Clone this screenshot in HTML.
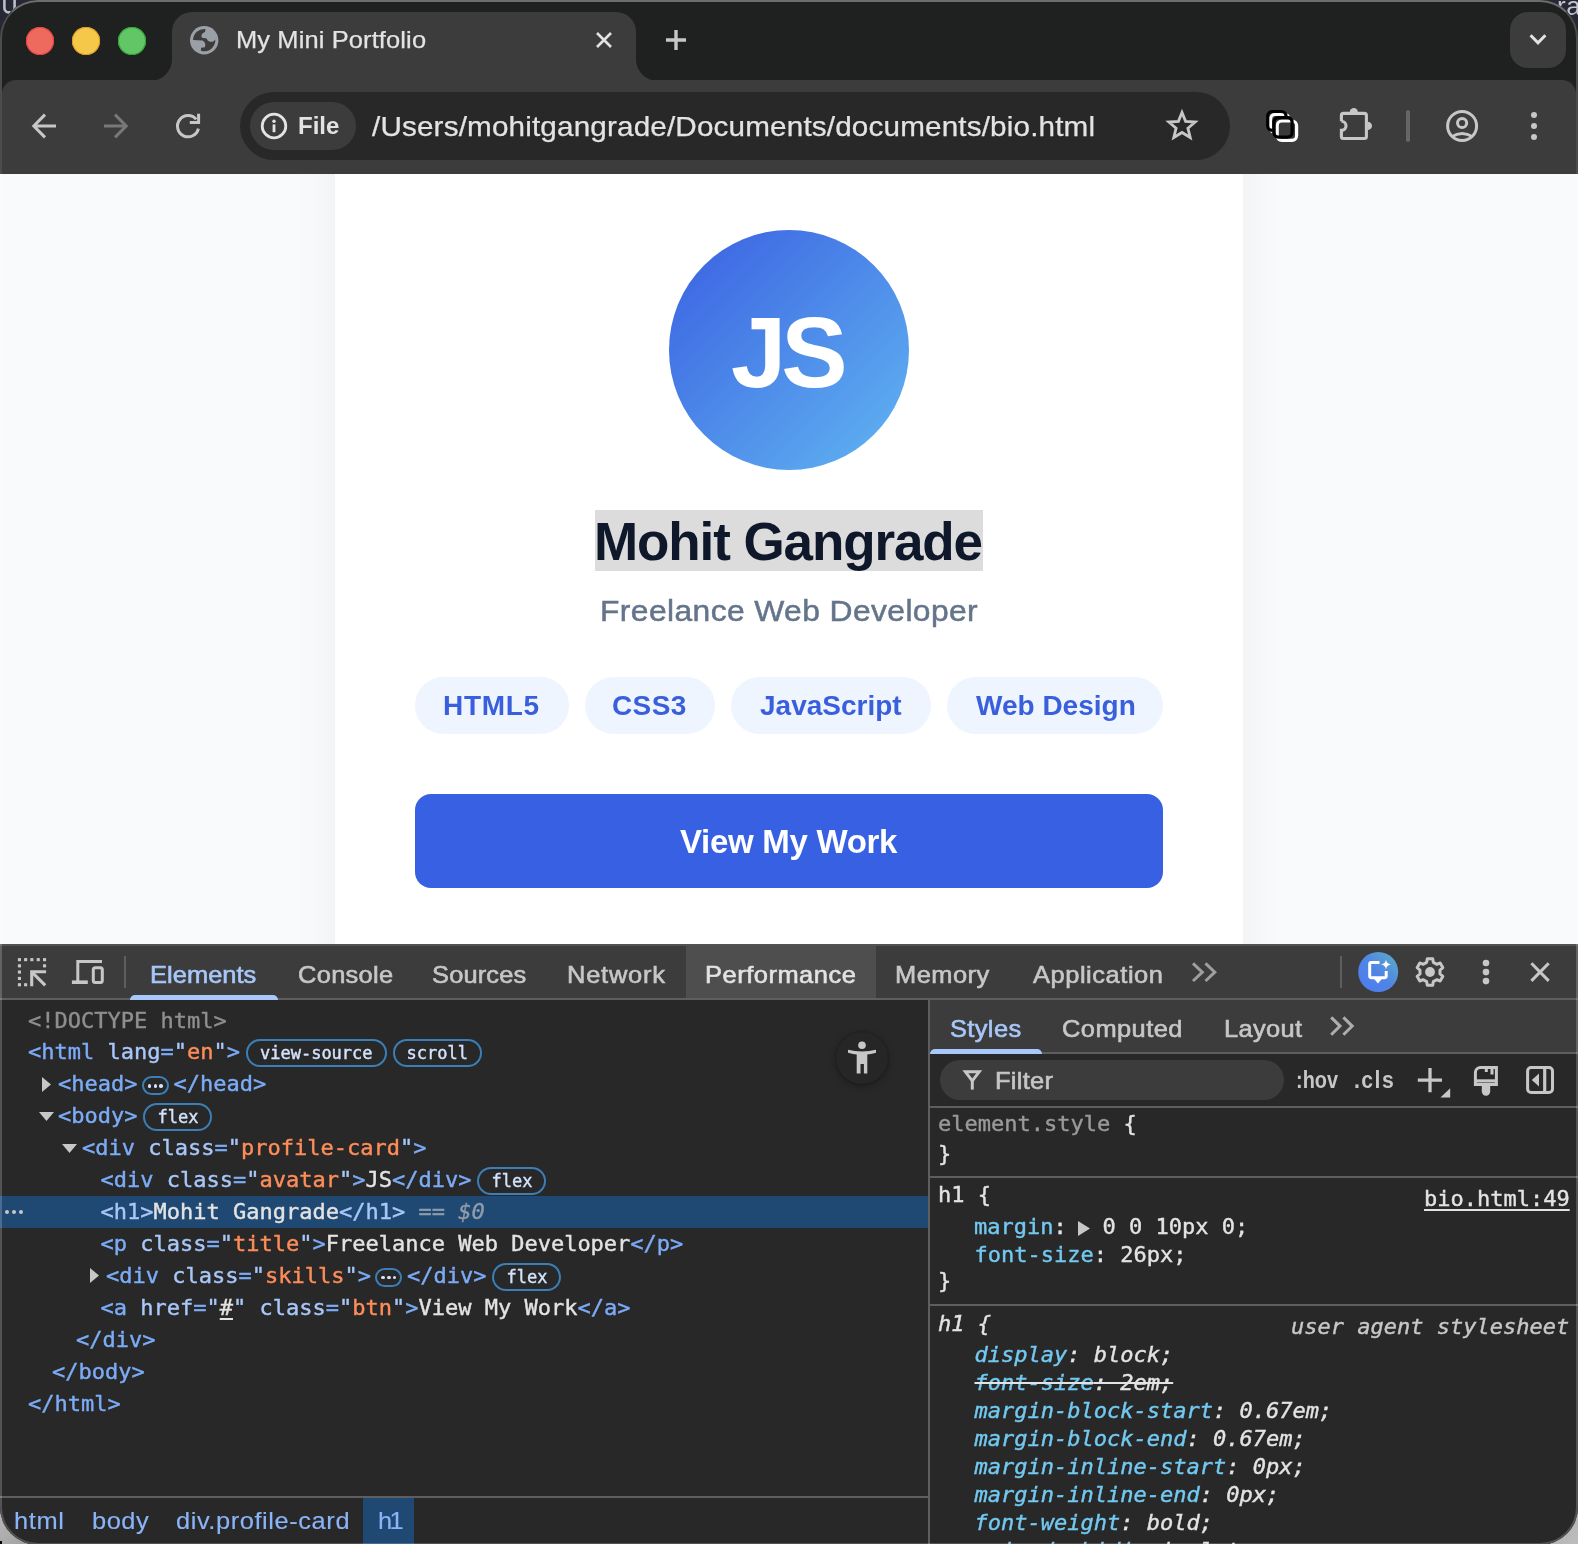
<!DOCTYPE html>
<html lang="en">
<head>
<meta charset="utf-8">
<title>My Mini Portfolio</title>
<style>
*{box-sizing:border-box;margin:0;padding:0}
html,body{width:1578px;height:1544px;overflow:hidden;background:#272834}
body{position:relative;font-family:"Liberation Sans",sans-serif;-webkit-font-smoothing:antialiased}
.abs{position:absolute}
.t{position:absolute;white-space:pre;line-height:1}
svg{position:absolute;overflow:visible}
/* window */
#win{position:absolute;left:0;top:0;width:1578px;height:1544px;overflow:hidden;background:transparent}
#winbg{position:absolute;left:0;top:0;width:1578px;height:1544.5px;border-radius:38px;background:#1f2020}
#clip{will-change:transform;position:absolute;left:0;top:0;width:1578px;height:1544.5px;border-radius:38px;overflow:hidden}
#clip>#in{position:absolute;left:0;top:0;width:1578px;height:1544px}
#winborder{position:absolute;left:0;top:0;width:1578px;height:1544.5px;border-radius:38px;border:2px solid rgba(255,255,255,.2);border-top-color:rgba(255,255,255,.35);pointer-events:none;z-index:50}
#tabstrip{position:absolute;left:0;top:0;width:1578px;height:81px;background:#1f2020}
#tab{position:absolute;left:172px;top:12px;width:464px;height:70px;background:#3c3c3c;border-radius:20px 20px 0 0}
#tab:before,#tab:after{content:"";position:absolute;bottom:1px;width:22px;height:22px;background:radial-gradient(circle at 0 0,rgba(0,0,0,0) 21.5px,#3c3c3c 22.5px)}
#tab:before{left:-22px}
#tab:after{right:-22px;transform:scaleX(-1)}
#toolbar{position:absolute;left:2px;top:80px;width:1574px;height:94px;background:#3c3c3c;border-radius:14px 14px 0 0}
#omni{position:absolute;left:240px;top:92px;width:990px;height:68px;border-radius:34px;background:#282828}
#chip{position:absolute;left:250px;top:102px;width:106px;height:48px;border-radius:24px;background:#3c3c3c}
#tsbtn{position:absolute;left:1510px;top:12px;width:56px;height:56px;border-radius:18px;background:#3c3c3c}
.tl{position:absolute;top:27px;width:28px;height:28px;border-radius:50%}
/* page */
#pg{position:absolute;left:0;top:174px;width:1578px;height:770px;background:#f8fafc;overflow:hidden}
#card{position:absolute;left:335px;top:-60px;width:908px;height:900px;background:#fff;box-shadow:0 0 44px rgba(20,25,35,.05)}
#avatar{position:absolute;left:669px;top:55.5px;width:240px;height:240px;border-radius:50%;background:linear-gradient(135deg,#3c63e2 5%,#5fb2f1 95%)}
.pill{position:absolute;top:503px;height:57px;border-radius:29px;background:#eff5ff}
.pt{color:#3a5fdd;font-weight:bold;font-size:28px}
#btn{position:absolute;left:415px;top:620px;width:748px;height:94px;border-radius:16px;background:#3860e2}
/* devtools */
#dt{position:absolute;left:0;top:944px;width:1578px;height:600px;background:#282828;overflow:hidden}
.mono{font-family:"DejaVu Sans Mono","Liberation Mono",monospace;font-size:22px;-webkit-text-stroke:0.4px currentColor}
.ui{font-family:"Liberation Sans",sans-serif;font-size:24px;-webkit-text-stroke:0.6px currentColor;transform:scaleX(1.06);transform-origin:0 0}

.row{position:absolute;white-space:pre;height:32px;line-height:32px}
.it{font-style:italic}
.tg{color:#7cacf8}.tgs{color:#a8c7fa}.an{color:#a8c7fa}.av{color:#fe8d59}.tx{color:#e3e3e3}.dc{color:#8f8f8f}.dc2{color:#9a9a9a}.pn{color:#72c9f1}
.eq{color:#8f9bab}.d0{color:#8f9bab;font-style:italic}
.bd{display:inline-block;vertical-align:top;margin:3px 0 0 6px;height:28px;line-height:24px;border:2px solid #3a7fb8;border-radius:14px;padding:0 12px;font-size:17px;color:#d3e3fd}
.bd+.bd{margin-left:6px}
.dd{display:inline-block;vertical-align:top;position:relative;margin:8px 4.5px 0 4.5px;width:27px;height:19px;border:2px solid #3a7fb8;border-radius:10px}
.dd i{position:absolute;top:6px;width:3.5px;height:3.5px;border-radius:50%;background:#d3e3fd}
.dd i:nth-child(1){left:4px}.dd i:nth-child(2){left:9.75px}.dd i:nth-child(3){left:15.5px}
.ld{position:absolute;top:0;width:4px;height:4px;border-radius:50%;background:#c7c7c7}
</style>
</head>
<body>
<div class="abs" style="left:0;top:1500px;width:44px;height:44px;background:linear-gradient(135deg,#bcbcbc,#9c9c9c)"></div>
<div class="abs" style="left:1534px;top:1500px;width:44px;height:44px;background:linear-gradient(135deg,#a4a4a4,#bebebe)"></div>
<div class="abs" style="left:0;top:1541px;width:2px;height:3px;background:#000"></div>
<svg style="left:0;top:0" width="24" height="16" viewBox="0 0 24 16"><path d="M4.4 -2V8.2A4.2 4.2 0 0 0 8.6 12.4H10.4A4.2 4.2 0 0 0 14.6 8.2V-2" stroke="#b9bdcc" stroke-width="2.6" fill="none"/></svg>
<div class="t" style="left:1557px;top:-7.5px;font-size:26px;color:#c3c7d3;letter-spacing:0.5px;will-change:transform">ra</div>
<div id="win"><div id="winbg"></div><div id="clip"><div id="in">
  <div id="tabstrip"></div>
  <div id="tab"></div>
  <div id="toolbar"></div>
  <div class="tl" style="left:26px;background:#ee6a5f;box-shadow:inset 0 0 0 1px #e0443e"></div>
  <div class="tl" style="left:72px;background:#f5c84a;box-shadow:inset 0 0 0 1px #dfa023"></div>
  <div class="tl" style="left:118px;background:#62c566;box-shadow:inset 0 0 0 1px #2fa734"></div>
  <div class="t" id="tabtitle" style="left:235.5px;top:27.5px;font-size:24px;color:#e3e3e3;letter-spacing:0.12px;transform:scaleX(1.06);transform-origin:0 0;-webkit-text-stroke:0.25px #e3e3e3">My Mini Portfolio</div>
  <div id="tsbtn"></div>
  <div id="omni"></div>
  <div id="chip"></div>
  <div class="t" id="filetxt" style="left:298px;top:114px;font-size:24px;color:#e3e3e3;font-weight:bold">File</div>
  <div class="t" id="url" style="left:371.5px;top:112.5px;font-size:28px;color:#e3e3e3;letter-spacing:0.14px;transform:scaleX(1.06);transform-origin:0 0;-webkit-text-stroke:0.25px #e3e3e3">/Users/mohitgangrade/Documents/documents/bio.html</div>

<!--IC-->
<svg style="left:189.9px;top:25.5px" width="28.4" height="28.4" viewBox="-14.2 -14.2 28.4 28.4"><circle r="14.2" fill="#9aa0a6"/><path fill="#3c3c3c" d="M1.3 -11.1 L0.8 -8.3 Q-2.2 -7.6 -2.6 -5.2 Q-3.4 -3.2 -1.6 -2.2 L1.8 -2 Q2.9 -1.4 3.3 0.1 Q4.3 1.5 6 1.55 L8.6 1.5 Q10 0.8 11.15 -0.6 A11.15 11.15 0 0 1 -3.3 10.65 L-3.2 7.6 L0.7 7.1 Q1.3 5 1 3.6 Q0.3 0.8 -1.6 0.2 L-11.14 -0.1 A11.15 11.15 0 0 1 1.3 -11.1Z"/></svg>
<svg style="left:596px;top:32px" width="16" height="16" viewBox="0 0 16 16"><path d="M1 1L15 15M15 1L1 15" stroke="#e3e3e3" stroke-width="2.6" fill="none"/></svg>
<svg style="left:666px;top:30px" width="20" height="20" viewBox="0 0 20 20"><path d="M10 0V20M0 10H20" stroke="#c7c7c7" stroke-width="3.4" fill="none"/></svg>
<svg style="left:1529px;top:33px" width="18" height="13" viewBox="0 0 18 13"><path d="M1.6 2.2L9 9.8L16.4 2.2" stroke="#e3e3e3" stroke-width="3" fill="none"/></svg>
<svg style="left:30px;top:112px" width="28" height="28" viewBox="30 112 28 28"><path d="M56 126H34M45 114.6L33.8 126L45 137.4" stroke="#c7c7c7" stroke-width="3" fill="none"/></svg>
<svg style="left:102px;top:112px" width="28" height="28" viewBox="102 112 28 28"><path d="M104 126H126M115 114.6L126.2 126L115 137.4" stroke="#787878" stroke-width="3" fill="none"/></svg>
<svg style="left:174px;top:112px" width="28" height="28" viewBox="174 112 28 28"><path d="M196.2 119.4A10.6 10.6 0 1 0 198.4 128.6" stroke="#c7c7c7" stroke-width="3" fill="none"/><path d="M198.6 113.8V122.6H189.8" stroke="#c7c7c7" stroke-width="3" fill="none"/></svg>
<svg style="left:260px;top:112px" width="28" height="28" viewBox="260 112 28 28"><circle cx="274" cy="126" r="11.8" stroke="#e3e3e3" stroke-width="2.8" fill="none"/><circle cx="274" cy="121.2" r="1.7" fill="#e3e3e3"/><path d="M274 124.4V132.2" stroke="#e3e3e3" stroke-width="2.8"/></svg>
<svg style="left:1164px;top:108px" width="36" height="36" viewBox="1164 108 36 36"><path d="M1182.0 112.4 L1185.6 121.3 L1195.2 122.0 L1187.9 128.2 L1190.2 137.5 L1182.0 132.5 L1173.8 137.5 L1176.1 128.2 L1168.8 122.0 L1178.4 121.3Z" stroke="#c7c7c7" stroke-width="2.8" fill="none" stroke-linejoin="miter"/></svg>
<svg style="left:1262px;top:106px" width="40" height="40" viewBox="1262 106 40 40">
<rect x="1270.6" y="114.4" width="18.4" height="18.4" rx="4.6" stroke="#fff" stroke-width="3.2" fill="none"/>
<rect x="1267.7" y="111.5" width="18.3" height="18.9" rx="4.6" stroke="#000" stroke-width="3.2" fill="none"/>
<rect x="1272.3" y="116" width="25.9" height="26" rx="6.5" fill="#3c3c3c"/>
<rect x="1277.2" y="121" width="19.4" height="19.4" rx="4.6" stroke="#fff" stroke-width="3.2" fill="#3a3a3a"/>
<rect x="1273.9" y="117.6" width="18.2" height="19.5" rx="4.6" stroke="#000" stroke-width="3.2" fill="none"/>
</svg>
<svg style="left:1336px;top:104px" width="40" height="40" viewBox="1336 104 40 40"><path d="M1341.4 121.2V115.4A2 2 0 0 1 1343.4 113.4H1364.4A2 2 0 0 1 1366.4 115.4V136.5A2 2 0 0 1 1364.4 138.5H1343.4A2 2 0 0 1 1341.4 136.5V130.4A4.6 4.6 0 0 0 1341.4 121.2" stroke="#c7c7c7" stroke-width="3.1" fill="none"/><path d="M1349.7 112.4A4.1 4.3 0 0 1 1357.9 112.4Z" fill="#c7c7c7"/><path d="M1367.6 121.8A4.4 4.1 0 0 1 1367.6 130Z" fill="#c7c7c7"/></svg>
<div class="abs" style="left:1406px;top:110px;width:4px;height:32px;border-radius:2px;background:#666"></div>
<svg style="left:1444px;top:108px" width="36" height="36" viewBox="1444 108 36 36"><circle cx="1462.1" cy="126" r="14.5" stroke="#c7c7c7" stroke-width="3" fill="none"/><circle cx="1462.1" cy="123" r="4.6" stroke="#c7c7c7" stroke-width="3" fill="none"/><path d="M1451.6 136.8 Q1462.1 130 1472.6 136.8" stroke="#c7c7c7" stroke-width="3" fill="none"/></svg>
<div class="abs" style="left:1530.6px;top:111.7px;width:6.6px;height:6.6px;border-radius:50%;background:#c7c7c7"></div>
<div class="abs" style="left:1530.6px;top:122.7px;width:6.6px;height:6.6px;border-radius:50%;background:#c7c7c7"></div>
<div class="abs" style="left:1530.6px;top:133.7px;width:6.6px;height:6.6px;border-radius:50%;background:#c7c7c7"></div>
<!--/IC-->
  <div id="pg">
    <div id="card"></div>
    <div id="avatar"></div>
    <div class="t" id="js" style="left:731px;top:129px;font-size:99.5px;letter-spacing:-5px;font-weight:bold;color:#fff">JS</div>
    <div class="abs" id="sel" style="left:595px;top:336px;width:388px;height:61px;background:#dcdcdc"></div>
    <div class="t" id="name" style="left:594px;top:341px;font-size:53px;letter-spacing:-1.1px;font-weight:bold;color:#0f172a">Mohit Gangrade</div>
    <div class="t" id="sub" style="left:600px;top:422px;font-size:30px;letter-spacing:0.38px;transform:scaleX(1.06);transform-origin:0 0;-webkit-text-stroke:0.5px #64748b;color:#64748b">Freelance Web Developer</div>
    <div class="pill" style="left:415px;width:154px"></div>
    <div class="pill" style="left:585px;width:130px"></div>
    <div class="pill" style="left:731px;width:200px"></div>
    <div class="pill" style="left:947px;width:216px"></div>
    <div class="t pt" id="p1" style="left:443px;top:518px;letter-spacing:0.7px">HTML5</div>
    <div class="t pt" id="p2" style="left:612px;top:518px;letter-spacing:0.4px">CSS3</div>
    <div class="t pt" id="p3" style="left:760px;top:518px">JavaScript</div>
    <div class="t pt" id="p4" style="left:976px;top:518px">Web Design</div>
    <div id="btn"></div>
    <div class="t" id="btntxt" style="left:680px;top:651px;font-size:33px;letter-spacing:-0.3px;font-weight:bold;color:#fff">View My Work</div>
  </div>

  <div id="dt">
<!--DT-->
<div class="abs" style="left:0;top:0;width:1578px;height:2px;background:#525252"></div>
<div class="abs" style="left:0;top:2px;width:1578px;height:52px;background:#3c3c3c"></div>
<div class="abs" style="left:686px;top:2px;width:190px;height:52px;background:#4e4e4e"></div>
<div class="abs" style="left:0;top:54px;width:1578px;height:2px;background:#5e5e5e"></div>
<div class="abs" style="left:124px;top:12px;width:2px;height:32px;background:#5e5e5e"></div>
<div class="abs" style="left:1340px;top:12px;width:2px;height:32px;background:#5e5e5e"></div>
<div class="t ui" id="tEl" style="left:149.5px;top:18.5px;color:#a8c7fa;letter-spacing:0.04px">Elements</div>
<div class="t ui" id="tCo" style="left:297.5px;top:18.5px;color:#c7c7c7;letter-spacing:0.29px">Console</div>
<div class="t ui" id="tSo" style="left:431.5px;top:18.5px;color:#c7c7c7;letter-spacing:0.15px">Sources</div>
<div class="t ui" id="tNe" style="left:567px;top:18.5px;color:#c7c7c7;letter-spacing:0.73px">Network</div>
<div class="t ui" id="tPe" style="left:704.5px;top:18.5px;color:#e3e3e3;letter-spacing:0.49px">Performance</div>
<div class="t ui" id="tMe" style="left:895px;top:18.5px;color:#c7c7c7;letter-spacing:0.45px">Memory</div>
<div class="t ui" id="tAp" style="left:1033px;top:18.5px;color:#c7c7c7;letter-spacing:0.52px">Application</div>
<div class="abs" style="left:130px;top:51px;width:148px;height:5px;background:#a8c7fa;border-radius:5px 5px 0 0"></div>
<div class="abs" style="left:928px;top:56px;width:2px;height:560px;background:#5e5e5e"></div>
<div class="abs" style="left:0;top:252px;width:928px;height:32px;background:#1f4872"></div>
<div class="row mono" id="r0" style="left:28px;top:60.50px"><span class="dc">&lt;!DOCTYPE html&gt;</span></div>
<div class="row mono" id="r1" style="left:28px;top:92.42px"><span class="tg">&lt;html </span><span class="an">lang</span><span class="tg">=</span><span class="an">"</span><span class="av">en</span><span class="an">"</span><span class="tg">&gt;</span><span class="bd">view-source</span><span class="bd">scroll</span></div>
<div class="row mono" id="r2" style="left:58px;top:124.34px"><span class="tg">&lt;head&gt;</span><span class="dd"><i></i><i></i><i></i></span><span class="tg">&lt;/head&gt;</span></div>
<div class="row mono" id="r3" style="left:58px;top:156.26px"><span class="tg">&lt;body&gt;</span><span class="bd">flex</span></div>
<div class="row mono" id="r4" style="left:82px;top:188.18px"><span class="tg">&lt;div </span><span class="an">class</span><span class="tg">=</span><span class="an">"</span><span class="av">profile-card</span><span class="an">"</span><span class="tg">&gt;</span></div>
<div class="row mono" id="r5" style="left:100.5px;top:220.10px"><span class="tg">&lt;div </span><span class="an">class</span><span class="tg">=</span><span class="an">"</span><span class="av">avatar</span><span class="an">"</span><span class="tg">&gt;</span><span class="tx">JS</span><span class="tg">&lt;/div&gt;</span><span class="bd">flex</span></div>
<div class="row mono" id="r6" style="left:100.5px;top:252.02px"><span class="tgs">&lt;h1&gt;</span><span class="tx">Mohit Gangrade</span><span class="tgs">&lt;/h1&gt;</span><span class="eq"> == </span><span class="d0">$0</span></div>
<div class="row mono" id="r7" style="left:100.5px;top:283.94px"><span class="tg">&lt;p </span><span class="an">class</span><span class="tg">=</span><span class="an">"</span><span class="av">title</span><span class="an">"</span><span class="tg">&gt;</span><span class="tx">Freelance Web Developer</span><span class="tg">&lt;/p&gt;</span></div>
<div class="row mono" id="r8" style="left:106px;top:315.86px"><span class="tg">&lt;div </span><span class="an">class</span><span class="tg">=</span><span class="an">"</span><span class="av">skills</span><span class="an">"</span><span class="tg">&gt;</span><span class="dd"><i></i><i></i><i></i></span><span class="tg">&lt;/div&gt;</span><span class="bd">flex</span></div>
<div class="row mono" id="r9" style="left:100.5px;top:347.78px"><span class="tg">&lt;a </span><span class="an">href</span><span class="tg">=</span><span class="an">"</span><span class="tx" style="text-decoration:underline;text-underline-offset:3px">#</span><span class="an">" </span><span class="an">class</span><span class="tg">=</span><span class="an">"</span><span class="av">btn</span><span class="an">"</span><span class="tg">&gt;</span><span class="tx">View My Work</span><span class="tg">&lt;/a&gt;</span></div>
<div class="row mono" id="r10" style="left:76px;top:379.70px"><span class="tg">&lt;/div&gt;</span></div>
<div class="row mono" id="r11" style="left:52px;top:411.62px"><span class="tg">&lt;/body&gt;</span></div>
<div class="row mono" id="r12" style="left:28px;top:443.54px"><span class="tg">&lt;/html&gt;</span></div>
<svg style="left:42px;top:133px" width="9" height="15" viewBox="0 0 9 15"><path d="M0 0L9 7.5L0 15Z" fill="#c7c7c7"/></svg>
<svg style="left:38.5px;top:168px" width="15" height="9" viewBox="0 0 15 9"><path d="M0 0L15 0L7.5 9Z" fill="#c7c7c7"/></svg>
<svg style="left:62px;top:200px" width="15" height="9" viewBox="0 0 15 9"><path d="M0 0L15 0L7.5 9Z" fill="#c7c7c7"/></svg>
<svg style="left:90px;top:324px" width="9" height="15" viewBox="0 0 9 15"><path d="M0 0L9 7.5L0 15Z" fill="#c7c7c7"/></svg>
<div class="abs" style="left:5px;top:266px;width:20px;height:4px"><i class="ld" style="left:0"></i><i class="ld" style="left:7px"></i><i class="ld" style="left:14px"></i></div>
<div class="abs" style="left:836px;top:88px;width:52px;height:52px;border-radius:50%;background:#262626;box-shadow:0 2px 7px rgba(0,0,0,.32),0 0 2px rgba(0,0,0,.25)"></div>
<div class="abs" style="left:0;top:552px;width:928px;height:2px;background:#5e5e5e"></div>
<div class="abs" style="left:363px;top:554px;width:51px;height:48px;background:#1f4872"></div>
<div class="t ui" id="b1" style="left:14px;top:564.5px;color:#8ab4f8;letter-spacing:0.6px;-webkit-text-stroke:0.15px #8ab4f8">html</div>
<div class="t ui" id="b2" style="left:91.5px;top:564.5px;color:#8ab4f8;letter-spacing:0.45px;-webkit-text-stroke:0.15px #8ab4f8">body</div>
<div class="t ui" id="b3" style="left:176px;top:564.5px;color:#8ab4f8;letter-spacing:0.54px;-webkit-text-stroke:0.15px #8ab4f8">div.profile-card</div>
<div class="t ui" id="b4" style="left:377.5px;top:564.5px;color:#8ab4f8;letter-spacing:-2.5px;-webkit-text-stroke:0.15px #8ab4f8">h1</div>
<div class="abs" style="left:930px;top:56px;width:648px;height:52px;background:#3c3c3c"></div>
<div class="abs" style="left:930px;top:108px;width:648px;height:2px;background:#5e5e5e"></div>
<div class="abs" style="left:930px;top:105px;width:112px;height:5px;background:#a8c7fa;border-radius:5px 5px 0 0"></div>
<div class="t ui" id="sSt" style="left:949.5px;top:73px;color:#a8c7fa;letter-spacing:0.35px">Styles</div>
<div class="t ui" id="sCo" style="left:1061.5px;top:73px;color:#c7c7c7;letter-spacing:0.41px">Computed</div>
<div class="t ui" id="sLa" style="left:1223.5px;top:73px;color:#c7c7c7;letter-spacing:0.34px">Layout</div>
<div class="abs" style="left:940px;top:116px;width:344px;height:40px;border-radius:20px;background:#3c3c3c"></div>
<div class="t ui" id="fil" style="left:995px;top:124.59999999999991px;color:#c7c7c7;letter-spacing:.27px">Filter</div>
<div class="t ui" id="hov" style="left:1295.5px;top:125px;color:#c7c7c7;font-size:23px;font-weight:bold;-webkit-text-stroke:0;transform:scaleX(.865);letter-spacing:0px">:hov</div>
<div class="t ui" id="cls" style="left:1354px;top:125px;color:#c7c7c7;font-size:23px;font-weight:bold;-webkit-text-stroke:0;transform:scaleX(.92);letter-spacing:1.6px">.cls</div>
<div class="abs" style="left:930px;top:162px;width:648px;height:2px;background:#5e5e5e"></div>
<div class="abs" style="left:930px;top:232px;width:648px;height:2px;background:#5e5e5e"></div>
<div class="abs" style="left:930px;top:360px;width:648px;height:2px;background:#5e5e5e"></div>
<div class="row mono" id="s0" style="left:938px;top:164.0px"><span class="dc2">element.style</span><span class="tx"> {</span></div>
<div class="row mono" id="s1" style="left:938px;top:194.20000000000005px"><span class="tx">}</span></div>
<div class="row mono" id="s2" style="left:938px;top:234.5px"><span class="tx">h1 {</span></div>
<div class="row mono" id="s2r" style="left:1424px;top:238.5px"><span class="tx" style="text-decoration:underline;text-underline-offset:3px">bio.html:49</span></div>
<div class="row mono" id="s3" style="left:974px;top:267.0px"><span class="pn">margin</span><span class="tx">: </span><span style="display:inline-block;width:22.5px"></span><span class="tx">0 0 10px 0;</span></div>
<div class="row mono" id="s4" style="left:974.5px;top:294.79999999999995px"><span class="pn">font-size</span><span class="tx">: 26px;</span></div>
<div class="row mono" id="s5" style="left:938px;top:321.29999999999995px"><span class="tx">}</span></div>
<div class="row mono it" id="s6" style="left:938px;top:364px"><span class="tx">h1 {</span></div>
<div class="row mono it" id="s6r" style="left:1291px;top:367px"><span style="color:#c7c7c7">user agent stylesheet</span></div>
<div class="row mono it" id="u0" style="left:974.5px;top:395px"><span class="pn">display</span><span class="tx">: block;</span></div>
<div class="row mono it" id="u1" style="left:974.5px;top:423px"><span style="text-decoration:line-through;text-decoration-color:#e3e3e3;text-decoration-thickness:1.6px"><span class="pn">font-size</span><span class="tx">: 2em;</span></span></div>
<div class="row mono it" id="u2" style="left:974.5px;top:451px"><span class="pn">margin-block-start</span><span class="tx">: 0.67em;</span></div>
<div class="row mono it" id="u3" style="left:974.5px;top:479px"><span class="pn">margin-block-end</span><span class="tx">: 0.67em;</span></div>
<div class="row mono it" id="u4" style="left:974.5px;top:507px"><span class="pn">margin-inline-start</span><span class="tx">: 0px;</span></div>
<div class="row mono it" id="u5" style="left:974.5px;top:535px"><span class="pn">margin-inline-end</span><span class="tx">: 0px;</span></div>
<div class="row mono it" id="u6" style="left:974.5px;top:563px"><span class="pn">font-weight</span><span class="tx">: bold;</span></div>
<div class="row mono it" id="u7" style="left:974.5px;top:591px"><span class="pn">unicode-bidi</span><span class="tx">: isolate;</span></div>
<svg style="left:1078px;top:277px" width="12" height="15" viewBox="0 0 12 15"><path d="M0 0L12 7.5L0 15Z" fill="#c7c7c7"/></svg>
<svg style="left:14px;top:10px" width="36" height="36" viewBox="14 954 36 36"><rect x="17.9" y="958.1" width="3.1" height="3.1" fill="#c7c7c7"/><rect x="24.1" y="958.1" width="3.1" height="3.1" fill="#c7c7c7"/><rect x="30.3" y="958.1" width="3.1" height="3.1" fill="#c7c7c7"/><rect x="36.7" y="958.1" width="3.1" height="3.1" fill="#c7c7c7"/><rect x="43.0" y="958.1" width="3.1" height="3.1" fill="#c7c7c7"/><rect x="17.9" y="964.3" width="3.1" height="3.1" fill="#c7c7c7"/><rect x="17.9" y="970.5" width="3.1" height="3.1" fill="#c7c7c7"/><rect x="17.9" y="976.9" width="3.1" height="3.1" fill="#c7c7c7"/><rect x="17.9" y="983.2" width="3.1" height="3.1" fill="#c7c7c7"/><rect x="43.0" y="964.3" width="3.1" height="3.1" fill="#c7c7c7"/><rect x="24.1" y="983.2" width="3.1" height="3.1" fill="#c7c7c7"/><path d="M46.1 971.8H31.7V986.3" stroke="#c7c7c7" stroke-width="3.1" fill="none"/><path d="M32.5 972.6L45.2 985.3" stroke="#c7c7c7" stroke-width="3.1" fill="none"/></svg>
<svg style="left:68px;top:10px" width="40" height="36" viewBox="68 954 40 36"><path d="M102 961.5H77.8V982" stroke="#c7c7c7" stroke-width="3" fill="none"/><path d="M71.9 982.2H87.8" stroke="#c7c7c7" stroke-width="3.6" fill="none"/><rect x="93.3" y="967.8" width="9" height="14.7" rx="2" stroke="#c7c7c7" stroke-width="3" fill="none"/></svg>
<svg style="left:1188px;top:14px" width="32" height="28" viewBox="1188 958 32 28"><path d="M1193 963.4L1202.3 972.2L1193 981M1205.5 963.4L1214.8 972.2L1205.5 981" stroke="#9e9e9e" stroke-width="3" fill="none"/></svg>
<svg style="left:1356px;top:6px" width="44" height="44" viewBox="1356 950 44 44"><defs><linearGradient id="aig" x1="0" y1="1" x2="1" y2="0"><stop offset="0" stop-color="#4b7bf0"/><stop offset="0.5" stop-color="#5085e6"/><stop offset="1" stop-color="#5cb0c4"/></linearGradient></defs>
<circle cx="1378.2" cy="972" r="20" fill="url(#aig)"/>
<path d="M1379.5 962.5H1371.2A1.5 1.5 0 0 0 1369.7 964V976.2A1.5 1.5 0 0 0 1371.2 977.7H1384.7A1.5 1.5 0 0 0 1386.2 976.2V971" stroke="#fff" stroke-width="3" fill="none"/>
<path d="M1373.8 978.5H1382.2L1378 983.6Z" fill="#fff"/>
<path d="M1386 959.6Q1386.6 963.9 1390.9 964.5Q1386.6 965.1 1386 969.4Q1385.4 965.1 1381.1 964.5Q1385.4 963.9 1386 959.6Z" fill="#fff"/></svg>
<svg style="left:1412px;top:10px" width="36" height="36" viewBox="1412 954 36 36"><path d="M1426.69 962.35 L1427.30 958.67 L1432.70 958.67 L1433.31 962.35 L1436.70 964.31 L1440.19 963.00 L1442.89 967.68 L1440.01 970.04 L1440.01 973.96 L1442.89 976.32 L1440.19 981.00 L1436.70 979.69 L1433.31 981.65 L1432.70 985.33 L1427.30 985.33 L1426.69 981.65 L1423.30 979.69 L1419.81 981.00 L1417.11 976.32 L1419.99 973.96 L1419.99 970.04 L1417.11 967.68 L1419.81 963.00 L1423.30 964.31Z" stroke="#c7c7c7" stroke-width="3" fill="none" stroke-linejoin="round"/><circle cx="1430" cy="972" r="4.9" fill="#c7c7c7"/></svg>
<svg style="left:1480px;top:14px" width="12" height="28" viewBox="1480 958 12 28"><circle cx="1486" cy="963" r="3.3" fill="#c7c7c7"/><circle cx="1486" cy="972.1" r="3.3" fill="#c7c7c7"/><circle cx="1486" cy="981.1" r="3.3" fill="#c7c7c7"/></svg>
<svg style="left:1528px;top:16px" width="24" height="24" viewBox="1528 960 24 24"><path d="M1531.4 963.2L1548.7 980.9M1548.7 963.2L1531.4 980.9" stroke="#c7c7c7" stroke-width="3" fill="none"/></svg>
<svg style="left:844px;top:94px" width="36" height="40" viewBox="844 1038 36 40"><circle cx="862" cy="1045.3" r="3.8" fill="#c7c7c7"/><path d="M848 1049.8Q862 1053.4 876 1049.8V1052.8Q870 1054.2 867.3 1054.5V1073.6H863.9V1063.9H860.5V1073.6H856.7V1054.5Q853.6 1054.2 848 1052.8Z" fill="#c7c7c7"/></svg>
<svg style="left:960px;top:122px" width="26" height="28" viewBox="960 1066 26 28"><path d="M965.4 1071.8H979.2L972.3 1080.8Z" stroke="#c7c7c7" stroke-width="3" fill="none" stroke-linejoin="miter"/><path d="M972.3 1080V1089.6" stroke="#c7c7c7" stroke-width="3" fill="none"/></svg>
<svg style="left:1326px;top:68px" width="32" height="28" viewBox="1326 1012 32 28"><path d="M1331.2 1017.4L1340 1026.1L1331.2 1034.8M1343.4 1017.4L1352.2 1026.1L1343.4 1034.8" stroke="#adadad" stroke-width="3" fill="none"/></svg>
<svg style="left:1414px;top:120px" width="40" height="36" viewBox="1414 1064 40 36"><path d="M1430 1068V1092.2M1417.8 1080.1H1442" stroke="#c7c7c7" stroke-width="3.3" fill="none"/><path d="M1450.2 1088.3V1097.6H1440.4Z" fill="#c7c7c7"/></svg>
<svg style="left:1470px;top:118px" width="32" height="38" viewBox="1470 1062 32 38"><path d="M1496.4 1067.5H1480.4A5 5 0 0 0 1475.4 1072.5V1084.5H1496.4Z" stroke="#c7c7c7" stroke-width="3" fill="none"/><path d="M1475.4 1080.9H1496.4" stroke="#c7c7c7" stroke-width="3.2"/><path d="M1486.3 1067.5V1072M1492 1067.5V1074.6" stroke="#c7c7c7" stroke-width="3"/><path d="M1481.8 1085H1490.2V1091.6A4.2 4.2 0 0 1 1481.8 1091.6Z" fill="#c7c7c7"/></svg>
<svg style="left:1522px;top:118px" width="36" height="36" viewBox="1522 1062 36 36"><rect x="1527.6" y="1067.5" width="24.9" height="24.9" rx="3.5" stroke="#c7c7c7" stroke-width="3" fill="none"/><path d="M1544.7 1067.5V1092.4" stroke="#c7c7c7" stroke-width="3.2"/><path d="M1531.8 1080L1539 1073.6V1086.6Z" fill="#c7c7c7"/></svg>
<!--/DT-->
  </div>
</div></div></div>
<div id="winborder"></div>
</body>
</html>
